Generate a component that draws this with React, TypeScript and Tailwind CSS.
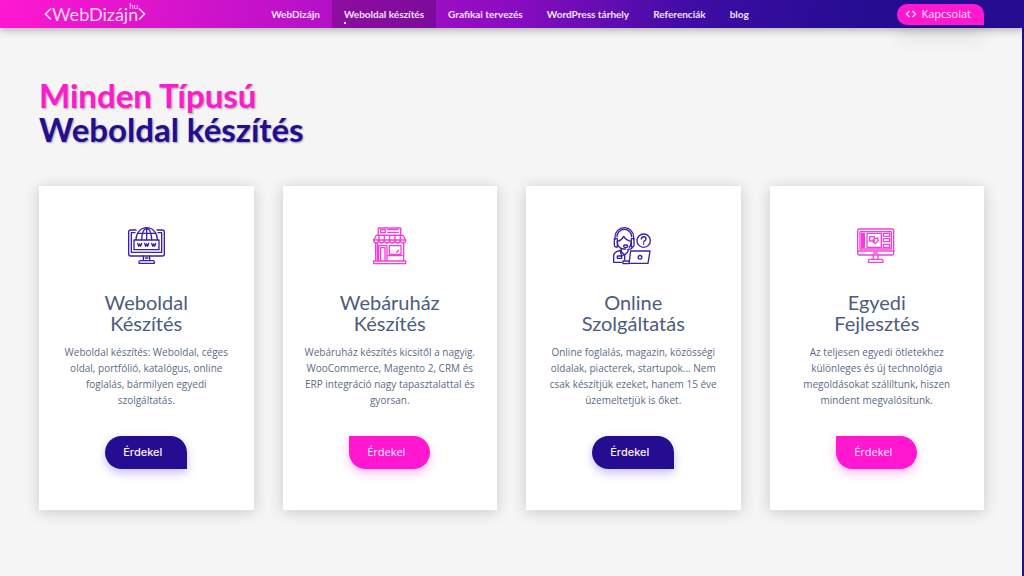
import type { ReactNode } from 'react';
import clsx from 'clsx';

const navLinks = [
  { label: 'WebDizájn', active: false },
  { label: 'Weboldal készítés', active: true },
  { label: 'Grafikai tervezés', active: false },
  { label: 'WordPress tárhely', active: false },
  { label: 'Referenciák', active: false },
  { label: 'blog', active: false },
];

function IconFrame({ children }: { children: ReactNode }) {
  return (
    <svg
      className="h-10 w-10"
      viewBox="48 32 120 120"
      fill="none"
      stroke="currentColor"
      strokeWidth="4"
      strokeLinecap="round"
      strokeLinejoin="round"
      aria-hidden="true"
    >
      {children}
    </svg>
  );
}

function WebsiteIcon() {
  return (
    <IconFrame>
      <path d="M78 44H62q-6 0-6 6v66q0 6 6 6h95q6 0 6-6V50q0-6-6-6h-16" />
      <path d="M75 52H64v59h91V52h-11" />
      <path d="M78 73a32 36 0 0 1 64 0" />
      <path d="M95 73c0-20 7-34 15-34s15 14 15 34M110 39v34M85 54h50" />
      <rect x="72" y="74" width="75" height="29" />
      <path strokeWidth="4" d="M83 84l3 9 3-7 3 7 3-9M104 84l3 9 3-7 3 7 3-9M125 84l3 9 3-7 3 7 3-9" />
      <path d="M100 122v14M119 122v14M87 144v-4q0-4 4-4h38q4 0 4 4v4zM106 128h8" />
    </IconFrame>
  );
}

function ShopIcon() {
  return (
    <IconFrame>
      <path d="M73 60V38h67v22M68 60h76M80 43h14v9H80zM101 43h32M101 51h32" />
      <path d="M67 60h80l8 14H59z" />
      <path d="M59 74c0 12 15 12 16 0c1 12 15 12 16 0c1 12 15 12 16 0c1 12 15 12 16 0c1 12 15 12 16 0c1 12 16 12 16 0" />
      <path d="M75 62v12M91 62v12M107 62v12M123 62v12M139 62v12" />
      <path d="M65 84v53M149 84v53M59 137h96v8H59zM74 137V91h25v46M80 137V97h13v40" />
      <path d="M106 91h35v26h-35zM101 121h44M128 111l6-6M70 84v50" />
    </IconFrame>
  );
}

function SupportIcon() {
  return (
    <IconFrame>
      <path d="M54 72V65a28 28 0 0 1 56 0v7M60 64a22 22 0 0 1 44 0" />
      <path d="M54 70h7v25h-4q-5 0-5-5V72zM103 70h8v20q0 5-5 5h-3z" />
      <path d="M61 78c9-2 15-7 19-15c5 8 12 13 22 15M61 80c0 12 8 21 20 21h5M102 82c0 6-2 11-5 14M106 95c0 5-6 7-12 7" />
      <rect x="80" y="89" width="12" height="7" rx="3" />
      <path d="M73 100v9l10 10 10-10v-7M73 104l-14 5q-9 4-9 13v19h24M83 119v14M69 105l5 17 9-5" />
      <rect x="61" y="122" width="13" height="7" />
      <path d="M101 107h58l-6 37H96zM78 137h19l-1 8H78zM96 144h57" />
      <circle cx="129" cy="126" r="5.5" />
      <circle cx="140" cy="76" r="20" />
      <path d="M133 71c0-9 14-9 14 0c0 5-7 5-7 10M140 86v1" />
    </IconFrame>
  );
}

function CustomIcon() {
  return (
    <IconFrame>
      <rect x="50" y="41" width="108" height="78" rx="5" />
      <path d="M50 107h108M57 49h94v52H57z" />
      <path d="M62 54h8v42h-8zM66 54v42M78 54h43v42H78zM62 62h8M62 70h8M62 78h8M62 87h8" />
      <path d="M86 64h14v13H86zM97 72l12-4 3 7-9 10-7-6z" />
      <path d="M127 54h19v9h-19zM127 70h19v9h-19zM127 87h19v9h-19z" />
      <path d="M97 119v13M111 119v13M82 141v-4q0-5 5-5h34q5 0 5 5v4zM98 113h11" />
    </IconFrame>
  );
}

const services = [
  {
    icon: WebsiteIcon,
    title: ['Weboldal', 'Készítés'],
    text: 'Weboldal készítés: Weboldal, céges oldal, portfólió, katalógus, online foglalás, bármilyen egyedi szolgáltatás.',
    pink: false,
  },
  {
    icon: ShopIcon,
    title: ['Webáruház', 'Készítés'],
    text: 'Webáruház készítés kicsitől a nagyig. WooCommerce, Magento 2, CRM és ERP integráció nagy tapasztalattal és gyorsan.',
    pink: true,
  },
  {
    icon: SupportIcon,
    title: ['Online', 'Szolgáltatás'],
    text: 'Online foglalás, magazin, közösségi oldalak, piacterek, startupok... Nem csak készítjük ezeket, hanem 15 éve üzemeltetjük is őket.',
    pink: false,
  },
  {
    icon: CustomIcon,
    title: ['Egyedi', 'Fejlesztés'],
    text: 'Az teljesen egyedi ötletekhez különleges és új technológia megoldásokat szálíltunk, hiszen mindent megvalósítunk.',
    pink: true,
  },
];

function Logo() {
  return (
    <a href="#" className="relative flex items-center text-[#fbd9f6]">
      <svg className="h-4 w-2" viewBox="0 0 8 16" fill="none" stroke="currentColor" strokeWidth="1.7" aria-hidden="true">
        <path d="M7 2.5L1.5 8L7 13.5" />
      </svg>
      <span className="text-[18px] leading-5">WebDizájn</span>
      <svg className="h-4 w-2" viewBox="0 0 8 16" fill="none" stroke="currentColor" strokeWidth="1.7" aria-hidden="true">
        <path d="M1 2.5L6.5 8L1 13.5" />
      </svg>
      <span className="absolute -top-1 right-2 text-[8px] leading-3">hu</span>
    </a>
  );
}

function Header() {
  return (
    <header className="relative z-10 flex h-7 items-center bg-[linear-gradient(100deg,#ff18d0_0%,#a50fc6_38%,#8a0cc0_50%,#3d0ca4_68%,#240d91_85%)] pr-10 pl-11 shadow-[0_2px_8px_rgba(0,0,0,0.3)]">
      <div className="flex flex-1">
        <Logo />
      </div>
      <nav className="mr-2 flex h-full">
        {navLinks.map((link) => (
          <a
            key={link.label}
            href="#"
            className={clsx(
              'relative flex h-full items-center px-3 text-[10px] font-bold text-[#f6e3fa]',
              link.active && 'bg-black/20'
            )}
          >
            {link.label}
            {link.active && <span className="absolute bottom-1 left-3 h-[2px] w-[2px] bg-white" />}
          </a>
        ))}
      </nav>
      <div className="flex flex-1 justify-end">
        <button
          type="button"
          className="flex h-[21px] items-center gap-1 rounded-[10px] rounded-br-none bg-[#ff18d0] pr-[13px] pl-2 font-['Open_Sans',sans-serif] text-[11px] text-[#ffe3f9] shadow-[0_14px_20px_rgba(0,0,0,0.08)]"
        >
          <svg className="h-3 w-3" viewBox="0 0 12 12" fill="none" stroke="currentColor" strokeWidth="1.3" aria-hidden="true">
            <path d="M4.5 3L1.5 6l3 3M7.5 3l3 3-3 3" />
          </svg>
          Kapcsolat
        </button>
      </div>
    </header>
  );
}

export default function App() {
  return (
    <div className="flex min-h-screen flex-col bg-[#f5f5f5] font-['Lato',sans-serif]">
      <Header />
      <main className="flex-1 border-r-2 border-[#240d91] pt-[50px] pr-[38px] pb-16 pl-[39px]">
        <h1 className="text-[33px] leading-[34px] font-bold text-[#240d91] [text-shadow:1px_1px_2px_rgba(0,0,0,0.35)]">
          <span className="text-[#fa1ccf]">Minden Típusú</span>
          <br />
          Weboldal készítés
        </h1>
        <div className="mt-10 grid grid-cols-4 gap-[29px]">
          {services.map((service) => (
            <article
              key={service.text}
              className="flex flex-col items-center bg-white px-5 pt-10 pb-[41px] text-center shadow-[0_2px_14px_rgba(0,0,0,0.18)]"
            >
              <div className={service.pink ? 'text-[#f43fd6]' : 'text-[#3a22a6]'}>
                <service.icon />
              </div>
              <h2 className="mt-[26px] text-[20px] leading-[21px] text-[#4c5d7c]">
                {service.title[0]}
                <br />
                {service.title[1]}
              </h2>
              <p className="mt-[10px] font-['Open_Sans',sans-serif] text-[10px] leading-4 text-[#5d6b85]">
                {service.text}
              </p>
              <button
                type="button"
                className={clsx(
                  'mt-7 h-[33px] rounded-[17px] pr-[25px] pl-[18px] text-[11px] text-[#fdeefb]',
                  service.pink
                    ? "rounded-tl-none bg-[#ff18d0] font-['Open_Sans',sans-serif] shadow-[0_4px_10px_rgba(255,24,208,0.3)]"
                    : "rounded-br-none bg-[#240d91] font-['Inter',sans-serif] font-medium shadow-[0_4px_10px_rgba(80,40,230,0.3)]"
                )}
              >
                Érdekel
              </button>
            </article>
          ))}
        </div>
      </main>
    </div>
  );
}
